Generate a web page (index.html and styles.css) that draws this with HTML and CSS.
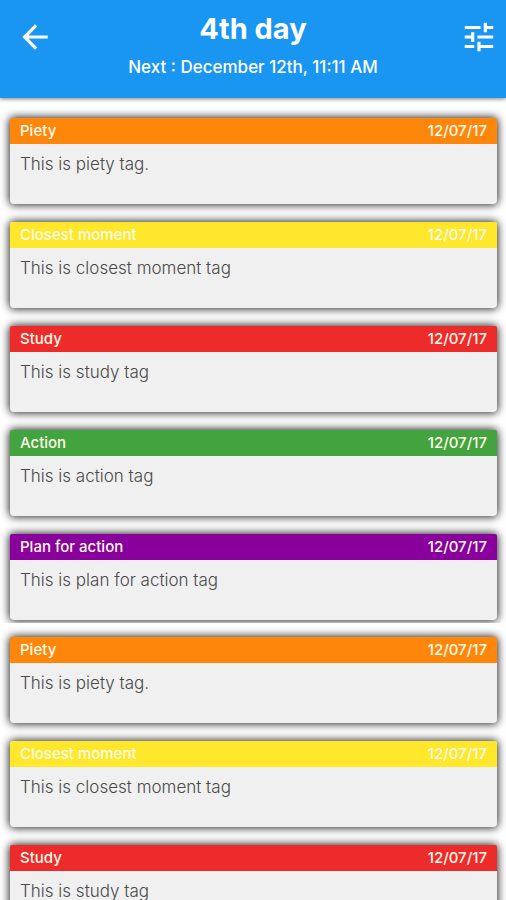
FILE: index.html
```html
<!DOCTYPE html>
<html lang="en">
<head>
<meta charset="utf-8">
<meta name="viewport" content="width=device-width, initial-scale=1">
<title>4th day</title>
<link rel="stylesheet" href="styles.css">
</head>
<body>
<header class="bar">
  <button class="icon-button" type="button" aria-label="Back">
    <svg class="icon" viewBox="0 0 24 24" aria-hidden="true"><path d="M20 11H7.83l5.59-5.59L12 4l-8 8 8 8 1.41-1.41L7.83 13H20v-2z"/></svg>
  </button>
  <div class="heading">
    <h1 class="title">4th day</h1>
    <p class="next">Next : December 12th, 11:11 AM</p>
  </div>
  <button class="icon-button icon-button-end" type="button" aria-label="Filters">
    <svg class="icon" viewBox="0 0 24 24" aria-hidden="true"><path d="M3 17v2h6v-2H3zM3 5v2h10V5H3zm10 16v-2h8v-2h-8v-2h-2v6h2zM7 9v2H3v2h4v2h2V9H7zm14 4v-2H11v2h10zm-6-4h2V7h4V5h-4V3h-2v6z"/></svg>
  </button>
</header>
<main>
  <section class="group group-first">
    <article class="card">
      <header class="card-head piety"><h2 class="tag">Piety</h2><time datetime="2017-12-07">12/07/17</time></header>
      <p class="note">This is piety tag.</p>
    </article>
    <article class="card">
      <header class="card-head moment"><h2 class="tag">Closest moment</h2><time datetime="2017-12-07">12/07/17</time></header>
      <p class="note">This is closest moment tag</p>
    </article>
    <article class="card">
      <header class="card-head study"><h2 class="tag">Study</h2><time datetime="2017-12-07">12/07/17</time></header>
      <p class="note">This is study tag</p>
    </article>
    <article class="card">
      <header class="card-head action"><h2 class="tag">Action</h2><time datetime="2017-12-07">12/07/17</time></header>
      <p class="note">This is action tag</p>
    </article>
    <article class="card">
      <header class="card-head plan"><h2 class="tag">Plan for action</h2><time datetime="2017-12-07">12/07/17</time></header>
      <p class="note">This is plan for action tag</p>
    </article>
  </section>
  <section class="group">
    <article class="card">
      <header class="card-head piety"><h2 class="tag">Piety</h2><time datetime="2017-12-07">12/07/17</time></header>
      <p class="note">This is piety tag.</p>
    </article>
    <article class="card">
      <header class="card-head moment"><h2 class="tag">Closest moment</h2><time datetime="2017-12-07">12/07/17</time></header>
      <p class="note">This is closest moment tag</p>
    </article>
    <article class="card">
      <header class="card-head study"><h2 class="tag">Study</h2><time datetime="2017-12-07">12/07/17</time></header>
      <p class="note">This is study tag</p>
    </article>
  </section>
</main>
</body>
</html>
```
FILE: styles.css
```css
* {
  box-sizing: border-box;
}

html {
  scrollbar-width: none;
}

body {
  margin: 0;
  background: #fff;
  color: #4a4a4a;
  font-family: Inter, "Liberation Sans", sans-serif;
}

h1,
h2,
p {
  margin: 0;
}

.bar {
  position: relative;
  display: grid;
  grid-template-columns: 1fr auto 1fr;
  align-items: start;
  min-height: 98px;
  padding: 12px 0 20px;
  background: #1996f2;
  color: #fff;
  box-shadow: 0 1px 4px rgba(0, 0, 0, 0.5);
}

.icon-button {
  display: flex;
  justify-self: start;
  margin-top: 6px;
  padding: 0 0 0 16px;
  border: 0;
  background: none;
  color: inherit;
  cursor: pointer;
}

.icon-button-end {
  justify-self: end;
  padding: 0 8px 0 0;
}

.icon {
  width: 38px;
  height: 38px;
  fill: currentColor;
}

.heading {
  text-align: center;
}

.title {
  font-size: 29px;
  font-weight: 700;
  line-height: 34px;
}

.next {
  margin-top: 10px;
  font-size: 17px;
  font-weight: 500;
  line-height: 22px;
}

.group {
  display: flex;
  flex-direction: column;
  gap: 18px;
  padding: 14px 9px 3px 10px;
  overflow: hidden;
}

.group-first {
  padding-top: 20px;
}

.card {
  min-height: 86px;
  border-radius: 4px;
  background: #f0f0f0;
  box-shadow: 0 0 8px 1px rgba(0, 0, 0, 0.85);
}

.card-head {
  display: flex;
  justify-content: space-between;
  padding: 3px 10px;
  border-radius: 2px 2px 0 0;
  color: #fffbe9;
  font-size: 15px;
  font-weight: 500;
  line-height: 20px;
}

.tag {
  font-size: inherit;
  font-weight: inherit;
}

.note {
  padding: 10px;
  font-size: 17px;
  font-weight: 300;
  line-height: 20px;
}

.piety {
  background: #fe860a;
}

.moment {
  background: #ffe72b;
}

.study {
  background: #ed2b2b;
}

.action {
  background: #43a33f;
}

.plan {
  background: #8a009c;
}
```
